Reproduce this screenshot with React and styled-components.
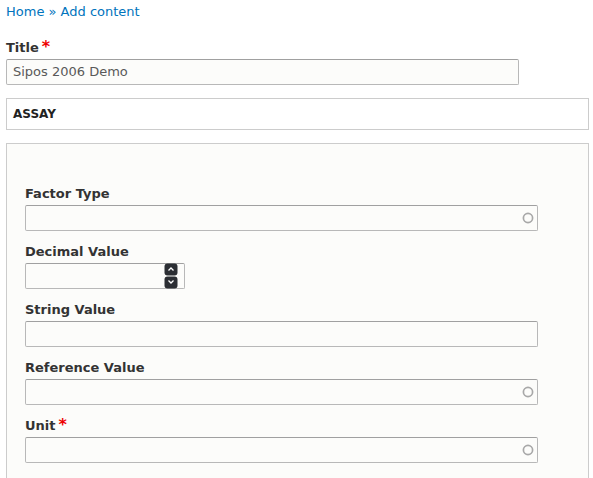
import React from "react";
import styled, { createGlobalStyle } from "styled-components";

const Global = createGlobalStyle`
  html, body { margin: 0; padding: 0; background: #fff; }
  body { font-family: "DejaVu Sans", Verdana, sans-serif; color: #333; }
  * { box-sizing: border-box; }
`;

const Page = styled.div`
  padding: 4px 4px 0 6px;
  height: 478px;
  overflow: hidden;
`;

const Breadcrumb = styled.nav`
  font-size: 13px;
  line-height: 15px;
  color: #0074bd;
  a { color: #0074bd; text-decoration: none; }
`;

const Field = styled.div`
  display: flex;
  flex-direction: column;
  align-items: flex-start;
  margin-top: ${(p) => p.$top || 0}px;
`;

const Label = styled.label`
  font-size: 13px;
  font-weight: bold;
  line-height: 16px;
  color: #333;
  margin-bottom: 3px;
  display: flex;
  align-items: flex-start;
  gap: 3px;
`;

const Req = styled.span`
  color: #e00;
  font-size: 16px;
  font-weight: bold;
  line-height: 14px;
`;

const InputWrap = styled.div`
  position: relative;
  width: ${(p) => p.$w}px;
  height: 26px;
`;

const Input = styled.div`
  width: 100%;
  height: 100%;
  border: 1px solid #b8b8b8;
  border-top-color: #a0a0a0;
  border-radius: 2px;
  background: #fcfcfa;
  font-size: 13px;
  line-height: 24px;
  padding: 0 6px;
  color: #595959;
`;

const Throbber = styled.svg`
  position: absolute;
  right: 4px;
  top: 7px;
`;

const Spinner = styled.svg`
  position: absolute;
  right: 7px;
  top: 0px;
`;

const Assay = styled.div`
  margin-top: 13px;
  border: 1px solid #ccc;
  height: 32px;
  padding: 0 6px;
  font-size: 12px;
  font-weight: bold;
  line-height: 31px;
  color: #222;
  text-transform: uppercase;
`;

const Fieldset = styled.div`
  margin-top: 13px;
  border: 1px solid #ccc;
  border-bottom: none;
  background: #fcfcfa;
  padding: 42px 0 20px 18px;
`;

const Circle = () => (
  <Throbber width="12" height="12" viewBox="0 0 12 12">
    <circle cx="6" cy="6" r="4.6" fill="none" stroke="#a8a8a8" strokeWidth="1.7" />
  </Throbber>
);

const Spin = () => (
  <Spinner width="14" height="26" viewBox="0 0 14 26">
    <rect x="0.5" y="0.5" width="13" height="12" rx="3" fill="#2b2e33" />
    <rect x="0.5" y="13.5" width="13" height="12" rx="3" fill="#2b2e33" />
    <path d="M4.5 7.5 L7 5 L9.5 7.5" fill="none" stroke="#fff" strokeWidth="1.3" />
    <path d="M4.5 17.5 L7 20 L9.5 17.5" fill="none" stroke="#fff" strokeWidth="1.3" />
  </Spinner>
);

const fields = [
  { label: "Factor Type", w: 513, icon: "circle" },
  { label: "Decimal Value", w: 160, icon: "spin" },
  { label: "String Value", w: 513 },
  { label: "Reference Value", w: 513, icon: "circle" },
  { label: "Unit", w: 513, icon: "circle", required: true },
];

export default function App() {
  return (
    <>
      <Global />
      <Page>
        <Breadcrumb>
          <a href="#">Home</a> » <a href="#">Add content</a>
        </Breadcrumb>
        <Field $top={21}>
          <Label>
            Title<Req>*</Req>
          </Label>
          <InputWrap $w={513}>
            <Input>Sipos 2006 Demo</Input>
          </InputWrap>
        </Field>
        <Assay>Assay</Assay>
        <Fieldset>
          {fields.map((f, i) => (
            <Field key={f.label} $top={i === 0 ? 0 : 13}>
              <Label>
                {f.label}
                {f.required && <Req>*</Req>}
              </Label>
              <InputWrap $w={f.w}>
                <Input />
                {f.icon === "circle" && <Circle />}
                {f.icon === "spin" && <Spin />}
              </InputWrap>
            </Field>
          ))}
        </Fieldset>
      </Page>
    </>
  );
}
